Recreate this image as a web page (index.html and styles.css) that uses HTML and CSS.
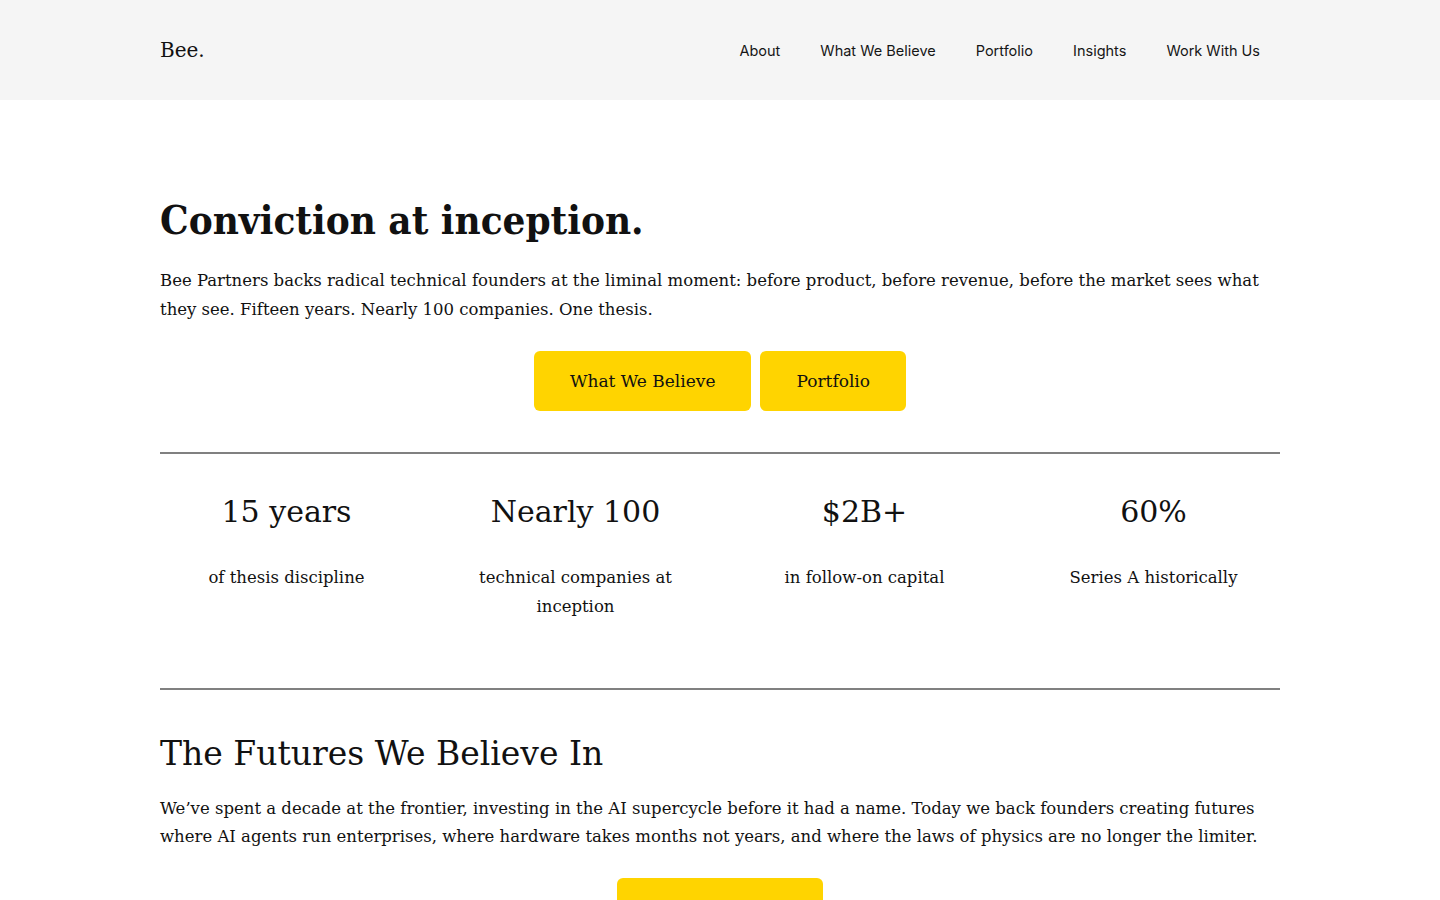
FILE: index.html
```html
<!DOCTYPE html>
<html lang="en">

<head>
  <meta charset="UTF-8">
  <meta name="viewport" content="width=device-width, initial-scale=1.0">
  <title>Bee Partners</title>
  <link rel="stylesheet" href="styles.css">
</head>

<body>
  <!-- Topo com logo e menu -->
  <header class="topo">
    <div class="container topo-inner">
      <a class="logo" href="#">Bee.</a>
      <nav class="menu">
        <a href="#">About</a>
        <a href="#">What We Believe</a>
        <a href="#">Portfolio</a>
        <a href="#">Insights</a>
        <a href="#">Work With Us</a>
      </nav>
    </div>
  </header>

  <main class="container">
    <!-- Hero -->
    <section class="hero">
      <h1>Conviction at inception.</h1>
      <p>Bee Partners backs radical technical founders at the liminal moment: before product, before revenue, before the market sees what they see. Fifteen years. Nearly 100 companies. One thesis.</p>
      <div class="botoes">
        <a class="btn" href="#">What We Believe</a>
        <a class="btn" href="#">Portfolio</a>
      </div>
    </section>

    <!-- Números -->
    <section class="stats">
      <div class="stat">
        <div class="stat-num">15 years</div>
        <div class="stat-label">of thesis discipline</div>
      </div>
      <div class="stat">
        <div class="stat-num">Nearly 100</div>
        <div class="stat-label">technical companies at inception</div>
      </div>
      <div class="stat">
        <div class="stat-num">$2B+</div>
        <div class="stat-label">in follow-on capital</div>
      </div>
      <div class="stat">
        <div class="stat-num">60%</div>
        <div class="stat-label">Series A historically</div>
      </div>
    </section>

    <!-- Futuros -->
    <section class="futuros">
      <h2>The Futures We Believe In</h2>
      <p>We’ve spent a decade at the frontier, investing in the AI supercycle before it had a name. Today we back founders creating futures where AI agents run enterprises, where hardware takes months not years, and where the laws of physics are no longer the limiter.</p>
      <div class="botoes botoes-futuros">
        <a class="btn btn-largo" href="#">Explore Our Theses</a>
      </div>
    </section>
  </main>
</body>

</html>
```

FILE: styles.css
```css
/* Estilo geral */
body {
  margin: 0;
  font-family: "DejaVu Serif", "Liberation Serif", serif;
  color: #111;
  background: #fff;
}

a {
  color: inherit;
  text-decoration: none;
}

.container {
  width: 1120px;
  margin: 0 auto;
}

/* Topo */
.topo {
  background-color: #f5f5f5;
  height: 100px;
}

.topo-inner {
  height: 100%;
  display: flex;
  align-items: center;
  justify-content: space-between;
}

.logo {
  font-size: 20px;
}

.menu {
  display: flex;
  gap: 40px;
  padding-right: 20px;
  font-family: Inter, "Open Sans", sans-serif;
  font-size: 14.5px;
  color: #161616;
}

/* Hero */
.hero {
  padding-top: 96px;
}

.hero h1 {
  font-family: "DejaVu Serif Condensed", "DejaVu Serif", serif;
  font-stretch: condensed;
  font-size: 40px;
  font-weight: 700;
  margin: 0 0 22px;
  line-height: 48px;
}

p {
  font-size: 16.5px;
  line-height: 29px;
  margin: 0;
}

.botoes {
  display: flex;
  justify-content: center;
  gap: 9px;
  margin-top: 27px;
}

.btn {
  background-color: #ffd400;
  border-radius: 6px;
  padding: 0 36px;
  height: 60px;
  display: flex;
  align-items: center;
  font-size: 17px;
}

.btn-largo {
  padding: 0 18px;
}

/* Números */
.stats {
  margin-top: 41px;
  border-top: 2px solid #808080;
  border-bottom: 2px solid #808080;
  display: grid;
  grid-template-columns: repeat(4, 1fr);
  gap: 36px;
  padding: 38px 0 67px;
}

.stat {
  text-align: center;
}

.stat-num {
  font-size: 30px;
  line-height: 40px;
}

.stat-label {
  margin-top: 31px;
  font-size: 16.5px;
  line-height: 29px;
}

/* Futuros */
.futuros {
  padding-top: 44px;
}

.futuros h2 {
  font-size: 33px;
  font-weight: 400;
  margin: 0 0 21px;
  line-height: 1.2;
}

.futuros p {
  line-height: 28px;
}

.botoes-futuros {
  margin-top: 27px;
}
```
